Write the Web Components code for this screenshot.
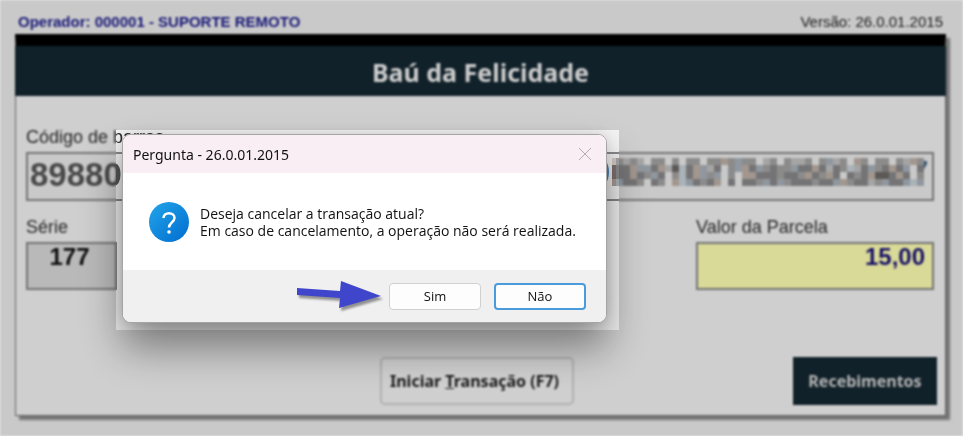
<!DOCTYPE html>
<html lang="pt-BR">
<head>
<meta charset="utf-8">
<title>Baú da Felicidade</title>
<style>
    body {
        margin: 0;
        background: #ededed;
        font-family: "Liberation Sans", Arial, sans-serif;
    }
</style>
</head>
<body>
<pos-screen>
    <pos-status operator="000001 - SUPORTE REMOTO" version="26.0.01.2015"></pos-status>
    <pos-panel heading="Baú da Felicidade">
        <pos-field slot="barcode" kind="barcode" label="Código de barras" value="89880"></pos-field>
        <pos-field slot="details" kind="serie" label="Série" value="177"></pos-field>
        <pos-field slot="details" kind="amount" label="Valor da Parcela" value="15,00"></pos-field>
        <pos-button slot="start">Iniciar <u>T</u>ransação (F7)</pos-button>
        <pos-button slot="receive" kind="dark">Recebimentos</pos-button>
    </pos-panel>
    <question-dialog slot="dialog" heading="Pergunta - 26.0.01.2015">
        Deseja cancelar a transação atual?<br>
        Em caso de cancelamento, a operação não será realizada.
    </question-dialog>
    <pointer-arrow slot="pointer"></pointer-arrow>
</pos-screen>

<script>
class PosScreen extends HTMLElement {
    constructor() {
        super();
        this.attachShadow({mode: 'open'}).innerHTML = `
            <style>
                :host {
                    display: block;
                    position: relative;
                    min-height: 100vh;
                    overflow: hidden;
                    --hole-left: 116px;
                    --hole-right: 619px;
                    --hole-top: 130px;
                    --hole-bottom: 330px;
                }
                ::slotted(question-dialog) {
                    position: absolute;
                    left: 122px;
                    top: 134px;
                }
                ::slotted(pointer-arrow) {
                    position: absolute;
                    left: 294px;
                    top: 278px;
                }
                /* dims everything except the spotlight around the dialog */
                .veil {
                    position: absolute;
                    inset: 0;
                    pointer-events: none;
                    backdrop-filter: blur(1px) brightness(85%);
                    clip-path: polygon(evenodd,
                        0 0, 100% 0, 100% 100%, 0 100%, 0 0,
                        var(--hole-left) var(--hole-top),
                        var(--hole-right) var(--hole-top),
                        var(--hole-right) var(--hole-bottom),
                        var(--hole-left) var(--hole-bottom),
                        var(--hole-left) var(--hole-top));
                }
            </style>
            <slot></slot>
            <slot name="dialog"></slot>
            <div class="veil"></div>
            <slot name="pointer"></slot>
        `;
    }
}

class PosStatus extends HTMLElement {
    connectedCallback() {
        this.attachShadow({mode: 'open'}).innerHTML = `
            <style>
                :host {
                    display: flex;
                    justify-content: space-between;
                    align-items: center;
                    height: 20px;
                    padding: 11px 20px 3px 18px;
                    font-size: 15px;
                    color: #222;
                }
                b { color: #1c1c8c; }
            </style>
            <b>Operador: ${this.getAttribute('operator')}</b>
            <span>Versão: ${this.getAttribute('version')}</span>
        `;
    }
}

class PosPanel extends HTMLElement {
    connectedCallback() {
        this.attachShadow({mode: 'open'}).innerHTML = `
            <style>
                :host {
                    display: block;
                    margin: 0 17px 20px 15px;
                    border: 1px solid #777;
                    border-top: 12px solid #000;
                    background: #f3f3f3;
                    box-shadow: 4px 4px 2px #888;
                }
                h1 {
                    margin: 0 -1px;
                    height: 50px;
                    line-height: 52px;
                    text-align: center;
                    background: #142731;
                    color: #f0f0f0;
                    font-family: "Noto Sans", sans-serif;
                    font-size: 25px;
                    font-weight: 700;
                }
                .row { padding: 0 11px 0 10px; }
                .barcode { padding-top: 30px; }
                .details {
                    display: flex;
                    justify-content: space-between;
                    padding-top: 15px;
                }
                .actions {
                    display: grid;
                    grid-template-columns: 1fr auto 1fr;
                    padding: 67px 8px 10px 0;
                }
                .end { justify-self: end; }
            </style>
            <h1>${this.getAttribute('heading')}</h1>
            <div class="row barcode"><slot name="barcode"></slot></div>
            <div class="row details"><slot name="details"></slot></div>
            <div class="actions">
                <span></span>
                <slot name="start"></slot>
                <div class="end"><slot name="receive"></slot></div>
            </div>
        `;
    }
}

/* one row of letters per mosaic row, each letter is a 7px tile */
const MOSAIC_ROWS = [
    'mama.mm.m.mm.mmtmbmm.am.maam.mbam.tm.mm.matm',
    'ddtbbdtakldtbad.mbtdbmdmmbddtdadmladbmdtdb.d',
    'ddtdmbd.mldtbmb.m.ttdddmddmtdmtd.dmdtkkdtd.m',
    'bddm.dm.tlbdmdt.d.ddmbdbmdddmddbtmddambddblb'
];
const MOSAIC_COLORS = {
    a: '#c2c2c2', m: '#a5a4a3', d: '#89898b', k: '#6c6865',
    t: '#bfb1a7', b: '#a9b2bb', l: '#c8d2d9'
};

function mosaic() {
    let tiles = '';
    MOSAIC_ROWS.forEach((row, y) => {
        [...row].forEach((tile, x) => {
            if (tile === '.') return;
            tiles += `<rect x="${12 + x * 7}" y="${y * 7}" width="7" height="7" fill="${MOSAIC_COLORS[tile]}"/>`;
        });
    });
    return `
        <svg class="mosaic" width="324" height="28" viewBox="0 0 324 28" aria-hidden="true">
            <path d="M0 1Q5 5 5 14T0 27z" fill="#4a82b5"/>
            <path d="M0 4Q3 8 3 14T0 25z" fill="#555"/>
            <rect x="8" y="0" width="4" height="7" fill="#d0c8c4"/>
            <rect x="8" y="7" width="4" height="14" fill="#7c706e"/>
            <rect x="8" y="21" width="4" height="7" fill="#a89a90"/>
            ${tiles}
            <path d="M320 3h3v3l-3 5z" fill="#3c6488"/>
        </svg>
    `;
}

class PosField extends HTMLElement {
    connectedCallback() {
        const kind = this.getAttribute('kind');
        this.attachShadow({mode: 'open'}).innerHTML = `
            <style>
                :host { display: block; }
                label {
                    display: block;
                    line-height: 22px;
                    padding-bottom: 4px;
                    font-size: 18px;
                    color: #2c2c2c;
                }
                .box { display: grid; }
                .box > * { grid-area: 1 / 1; }
                input {
                    box-sizing: border-box;
                    width: 100%;
                    height: 48px;
                    margin: 0;
                    border: 2px solid #888;
                    border-radius: 0;
                    outline: none;
                    font-family: inherit;
                    font-size: 24px;
                    font-weight: 700;
                    color: #111;
                }
                .barcode {
                    height: 49px;
                    padding: 0 2px 4px;
                    font-size: 33px;
                    color: #555;
                    background: #ededed;
                }
                .serie {
                    width: 91px;
                    padding: 0 4px 18px 0;
                    text-align: center;
                    background: #dadada;
                }
                .amount {
                    width: 238px;
                    padding: 0 7px 18px;
                    text-align: right;
                    color: #1a1478;
                    background: #ffffb3;
                }
                .mosaic {
                    justify-self: end;
                    margin: 6px 6px 0 0;
                }
            </style>
            <label for="value">${this.getAttribute('label')}</label>
            <div class="box">
                <input id="value" class="${kind}" type="text" value="${this.getAttribute('value')}">
                ${kind === 'barcode' ? mosaic() : ''}
            </div>
        `;
    }
}

class PosButton extends HTMLElement {
    connectedCallback() {
        this.attachShadow({mode: 'open'}).innerHTML = `
            <style>
                :host { display: block; }
                button {
                    box-sizing: border-box;
                    width: 194px;
                    height: 48px;
                    padding: 0 4px 0 0;
                    border: 2px solid #d0d0d0;
                    border-radius: 5px;
                    background: #f4f4f4;
                    color: #222;
                    font: 700 16px "Noto Sans", sans-serif;
                }
                .dark {
                    width: 144px;
                    padding: 0;
                    border: 0;
                    border-radius: 0;
                    background: #142731;
                    color: #d4d4d4;
                }
            </style>
            <button type="button" class="${this.getAttribute('kind') || ''}"><slot></slot></button>
        `;
    }
}

class QuestionDialog extends HTMLElement {
    connectedCallback() {
        this.attachShadow({mode: 'open'}).innerHTML = `
            <style>
                :host {
                    box-sizing: border-box;
                    width: 485px;
                    border: 1px solid #a4a4a4;
                    border-radius: 9px;
                    background: #fff;
                    overflow: hidden;
                    font-family: "Noto Sans", sans-serif;
                    font-size: 14px;
                    color: #111;
                    box-shadow: 0 24px 40px rgba(0, 0, 0, .42), 0 0 12px rgba(0, 0, 0, .12);
                }
                header {
                    display: flex;
                    justify-content: space-between;
                    align-items: center;
                    height: 38px;
                    padding: 0 15px 0 10px;
                    background: #f9eef4;
                }
                .close {
                    display: flex;
                    padding: 0;
                    border: 0;
                    background: none;
                }
                main {
                    display: flex;
                    align-items: center;
                    gap: 11px;
                    height: 97px;
                    padding: 0 20px 0 26px;
                    line-height: 17px;
                    font-family: "Open Sans", "Noto Sans", sans-serif;
                    font-size: 14px;
                }
                footer {
                    display: flex;
                    justify-content: flex-end;
                    align-items: center;
                    gap: 13px;
                    height: 52px;
                    padding: 0 20px;
                    background: #f0f0f0;
                }
                footer button {
                    box-sizing: border-box;
                    width: 92px;
                    height: 27px;
                    padding: 0;
                    border: 1px solid #d0d0d0;
                    border-radius: 4px;
                    background: #fdfdfd;
                    color: #111;
                    font: 13px "Open Sans", "Noto Sans", sans-serif;
                }
                footer .default {
                    border: 2px solid #4a9bdc;
                }
            </style>
            <header>
                <span>${this.getAttribute('heading')}</span>
                <button class="close" type="button" aria-label="Fechar">
                    <svg width="12" height="12" viewBox="0 0 12 12">
                        <path d="M0 0L12 12M12 0L0 12" stroke="#b5abb0" fill="none"/>
                    </svg>
                </button>
            </header>
            <main>
                <svg width="40" height="40" viewBox="0 0 40 40" aria-hidden="true">
                    <defs>
                        <linearGradient id="blue" x1="0" y1="0" x2="1" y2="1">
                            <stop offset="0.1" stop-color="#1f9fe6"/>
                            <stop offset="0.9" stop-color="#0472d2"/>
                        </linearGradient>
                    </defs>
                    <circle cx="20" cy="20" r="20" fill="url(#blue)"/>
                    <path d="M14.5 16C14.5 13 17 11.2 20 11.2s5.5 1.8 5.5 4.8c0 4.2-5.5 4.6-5.5 9.5" fill="none" stroke="#fff" stroke-width="2.5"/>
                    <circle cx="20" cy="30" r="1.8" fill="#fff"/>
                </svg>
                <div><slot></slot></div>
            </main>
            <footer>
                <button type="button">Sim</button>
                <button type="button" class="default">Não</button>
            </footer>
        `;
    }
}

class PointerArrow extends HTMLElement {
    constructor() {
        super();
        this.attachShadow({mode: 'open'}).innerHTML = `
            <style>
                :host { display: block; }
                svg {
                    display: block;
                    filter: drop-shadow(2px 3px 1px rgba(0, 0, 0, .4));
                }
            </style>
            <svg width="92" height="36" viewBox="0 0 92 36" aria-hidden="true">
                <path d="M3 10L46 13L47 3L87 18L45 30L46 20L3 17Z" fill="#4046cc"/>
            </svg>
        `;
    }
}

window.customElements.define('pos-screen', PosScreen);
window.customElements.define('pos-status', PosStatus);
window.customElements.define('pos-panel', PosPanel);
window.customElements.define('pos-field', PosField);
window.customElements.define('pos-button', PosButton);
window.customElements.define('question-dialog', QuestionDialog);
window.customElements.define('pointer-arrow', PointerArrow);
</script>
</body>
</html>
